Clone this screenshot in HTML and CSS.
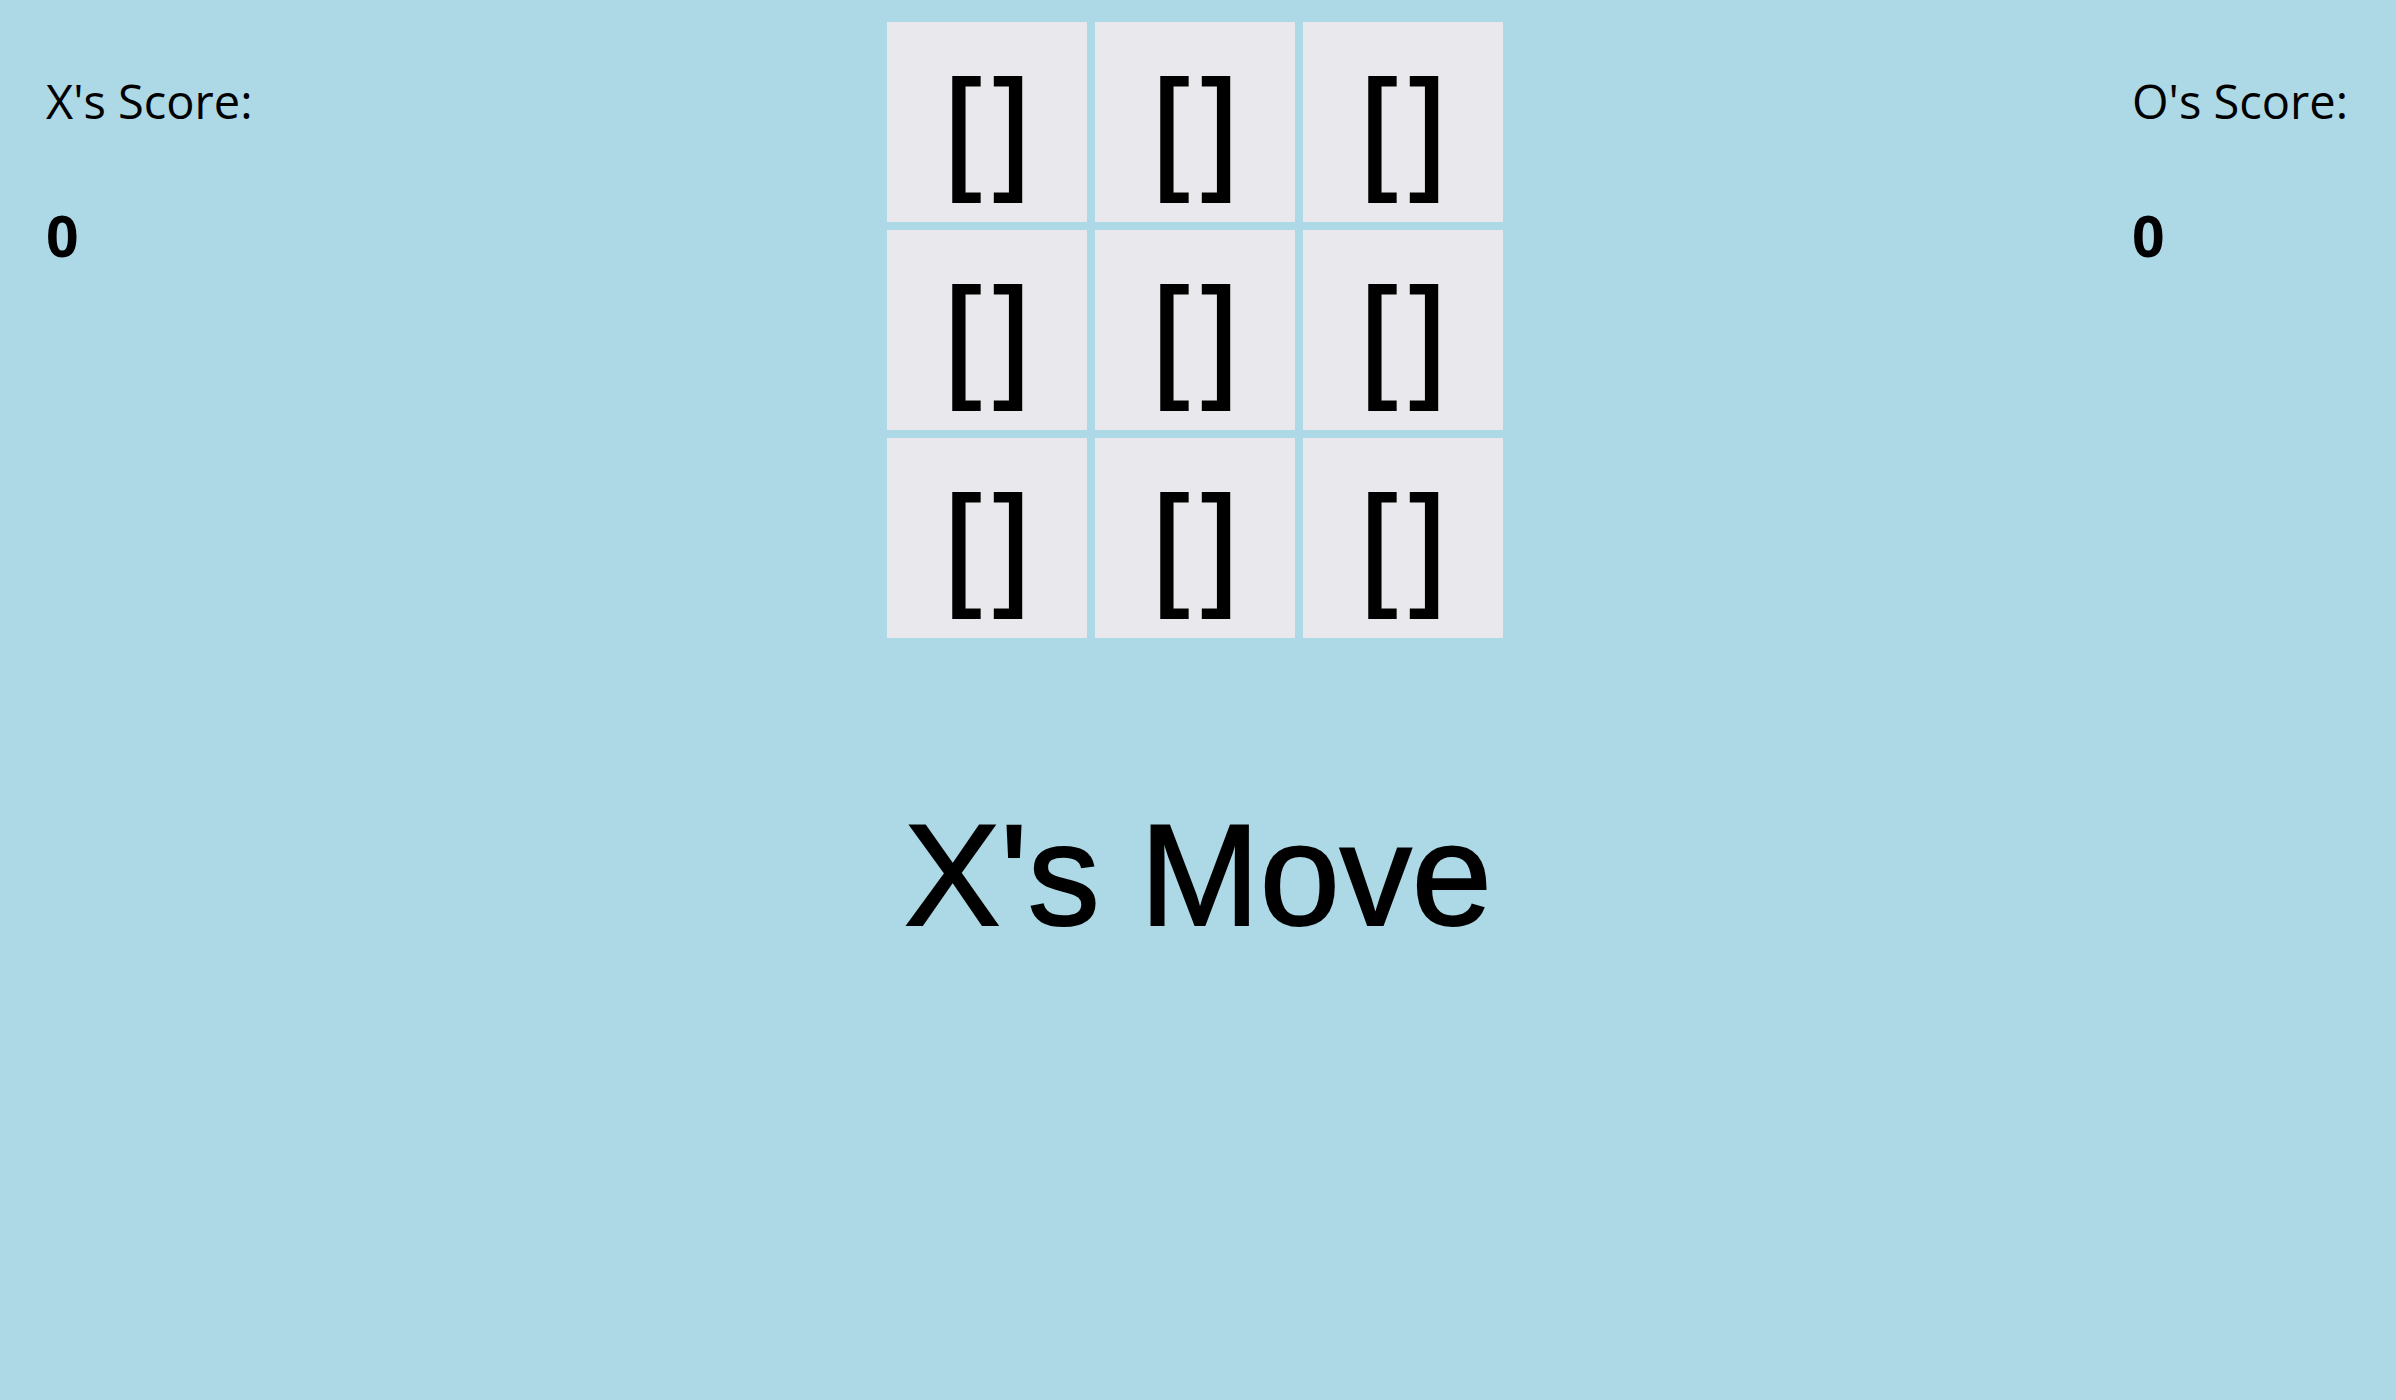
FILE: index.html
```html
<!DOCTYPE html>
<html lang="en">
<head>
    <meta charset="UTF-8">
    <meta name="viewport" content="width=device-width, initial-scale=1.0">
    <title>Tic Tac Toe</title>
    <link rel="stylesheet" href="styles.css">
</head>
<body>
    <div class="game">
        <div class="score">
            <div class="score-label">X's Score:</div>
            <div class="score-value" id="x-score">0</div>
        </div>

        <div class="board">
            <button class="cell">[]</button>
            <button class="cell">[]</button>
            <button class="cell">[]</button>
            <button class="cell">[]</button>
            <button class="cell">[]</button>
            <button class="cell">[]</button>
            <button class="cell">[]</button>
            <button class="cell">[]</button>
            <button class="cell">[]</button>
        </div>

        <div class="score">
            <div class="score-label">O's Score:</div>
            <div class="score-value" id="o-score">0</div>
        </div>
    </div>

    <div class="status" id="status">X's Move</div>
</body>
</html>
```

FILE: styles.css
```css
* {
    margin: 0;
    padding: 0;
    box-sizing: border-box;
}

body {
    font-family: "Segoe UI", "Open Sans", "Noto Sans", sans-serif;
    background: #add8e6;
    color: #000;
    min-height: 100vh;
}

.game {
    display: flex;
    justify-content: space-between;
    align-items: flex-start;
    padding: 22px 48px 0 46px;
}

.score {
    margin-top: 51px;
}

.score-label {
    font-size: 47px;
    line-height: 1.2;
    font-weight: 400;
}

.score-value {
    margin-top: 72px;
    font-size: 57px;
    line-height: 1.2;
    font-weight: 700;
}

.board {
    display: grid;
    grid-template-columns: repeat(3, 200px);
    grid-template-rows: repeat(3, 200px);
    gap: 8px;
    margin-left: 6px;
}

.cell {
    border: none;
    background: #e9e9ed;
    padding: 12px 0 0 13px;
    font-family: "Comic Sans MS", "Liberation Sans", sans-serif;
    font-size: 133px;
    font-weight: 400;
    letter-spacing: 13px;
    line-height: 1;
    color: #000;
    -webkit-text-stroke: 2px #000;
    cursor: pointer;
}

.status {
    margin-top: 152px;
    text-align: center;
    font-family: "Comic Sans MS", "Liberation Sans", sans-serif;
    font-size: 144px;
    line-height: 1.2;
    -webkit-text-stroke: 2px #000;
}
```
